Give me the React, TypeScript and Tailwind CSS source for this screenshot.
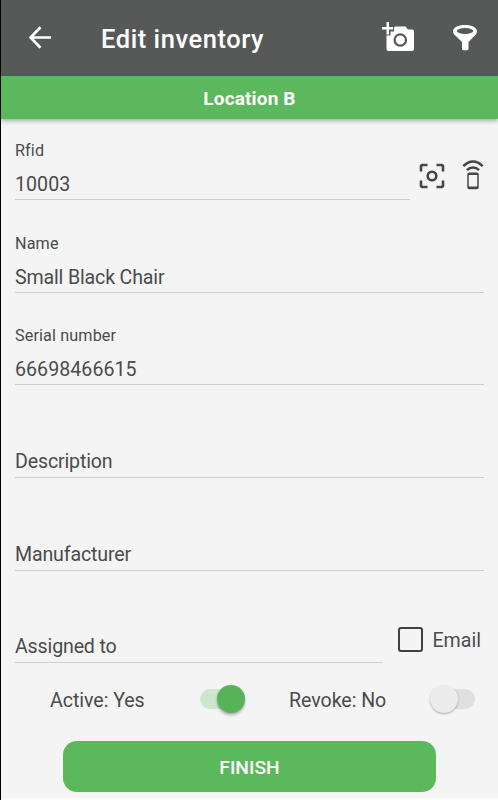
import { clsx } from "clsx";
import type { ReactNode } from "react";

interface FieldProps {
  label?: string;
  value: string;
  className?: string;
  valueClass?: string;
}

function Field({ label, value, className, valueClass = "tracking-[-0.16px]" }: FieldProps) {
  return (
    <div className={clsx("flex flex-col justify-end border-b border-[#cdcdcd]", className)}>
      {label && <div className="mb-[13px] text-[16.2px] leading-5 tracking-[0.12px]">{label}</div>}
      <div className={clsx("text-[19.6px] leading-[22px]", label ? "mb-[3px]" : "mb-[4px]", valueClass)}>{value}</div>
    </div>
  );
}

function Header() {
  return (
    <header className="flex h-[76px] items-center bg-[#575958] text-white">
      <svg viewBox="0 0 24 24" className="ml-[27px] h-6 w-6" fill="none" stroke="currentColor" strokeWidth="2.7">
        <path d="M23 11.500H3M12.500 1.300L2.600 11.500l9.900 10.200" />
      </svg>
      <h1 className="ml-[49px] pt-[2px] text-[25.500px] leading-8 font-medium tracking-[0.55px] whitespace-nowrap">
        Edit inventory
      </h1>
      <div className="mr-[20px] ml-auto flex items-center gap-[37px]">
        {/* Add photo */}
        <svg viewBox="0 0 34 32" className="h-8 w-[34px]" fill="currentColor">
          <path d="M14 4.500h10.500l2.500 3h4q2 0 2 2V27q0 2-2 2H7.500q-2 0-2-2V13.500h4v-4h3.500V5.500z" />
          <path d="M5.500 0h2.500v5h4v2.500H8v5H5.500v-5H1V5h4.500z" />
          <circle cx="19.300" cy="18" r="5.700" fill="none" stroke="#575958" strokeWidth="2.200" />
        </svg>
        {/* Filter */}
        <svg viewBox="0 0 26 28" className="h-7 w-[26px]" fill="currentColor">
          <path d="M1 7.200C1 3.600 6 1 13 1s12 2.600 12 6.200c0 1.500-.6 2.600-1.700 3.800L16.500 18v6.400q0 1.800-1.500 1.800h-3.500q-1.500 0-1.500-1.800V18L2.700 11C1.500 9.800 1 8.700 1 7.200z" />
          <ellipse cx="13" cy="7" rx="8.300" ry="2.900" fill="#575958" />
        </svg>
      </div>
    </header>
  );
}

function ScanIcons() {
  return (
    <div className="flex h-[34px] items-center gap-[17px] text-[#464646]">
      <svg viewBox="0 0 26 26" className="h-[26px] w-[26px]" fill="none" stroke="currentColor" strokeWidth="2.600">
        <path d="M2 8.500V3.500Q2 2 3.500 2h5M17.500 2h5Q24 2 24 3.500v5M24 17.500v5q0 1.500-1.500 1.500h-5M8.500 24h-5Q2 24 2 22.500v-5" />
        <circle cx="13" cy="13" r="4.300" />
      </svg>
      <svg viewBox="0 0 22 32" className="h-8 w-[22px]" fill="none" stroke="currentColor" strokeWidth="2.500">
        <path d="M1.300 6.100C7.500 0 14.500 0 20.700 6.100M5 10.100c3.300-3.600 8.700-3.600 12 0" />
        <path d="M7 13.200h8q1 0 1 1v13q0 1.300-1 1.300H7q-1 0-1-1.300v-13q0-1 1-1z" strokeWidth="1.500" />
        <path d="M6 14h10M6 27.500h10" strokeWidth="2" />
      </svg>
    </div>
  );
}

function Switch({ on }: { on: boolean }) {
  return (
    <div className={clsx("flex h-5 w-[45px] items-center rounded-full", on ? "justify-end bg-[#cde7cd]" : "bg-[#e0e0e0]")}>
      <div
        className={clsx(
          "h-7 w-7 shrink-0 rounded-full",
          on ? "bg-[#56b359] shadow-[0_2px_3px_rgba(0,0,0,0.3)]" : "bg-[#ececec] shadow-[0_1px_2px_rgba(0,0,0,0.3)]",
        )}
      />
    </div>
  );
}

function Toggle({ children, on }: { children: ReactNode; on: boolean }) {
  return (
    <div className="flex items-center justify-between">
      <span className="pt-[3px] text-[19.600px] leading-6 tracking-[-0.05px]">{children}</span>
      <Switch on={on} />
    </div>
  );
}

export default function App() {
  return (
    <div className="flex h-[800px] w-[498px] flex-col overflow-hidden border-l border-black bg-[#f4f4f4] font-[Roboto,sans-serif] text-[#4b4b4b]">
      <Header />
      <div className="h-[43px] shrink-0 bg-[#5cb85c] text-center text-[19px] leading-[45px] font-bold tracking-[0.15px] text-white shadow-[0_2px_4px_rgba(0,0,0,0.3)]">
        Location B
      </div>

      <main className="flex flex-col px-[14px]">
        <div className="flex h-[81px] items-end justify-between">
          <Field label="Rfid" value="10003" className="h-[81px] w-[395px]" valueClass="tracking-[0.05px]" />
          <div className="pb-[7px]">
            <ScanIcons />
          </div>
        </div>
        <Field label="Name" value="Small Black Chair" className="h-[93px]" />
        <Field label="Serial number" value="66698466615" className="h-[92px]" valueClass="tracking-[0.05px]" />
        <Field value="Description" className="h-[93px]" />
        <Field value="Manufacturer" className="h-[93px]" />
        <div className="flex h-[92px] items-end justify-between">
          <Field value="Assigned to" className="h-[92px] w-[368px]" />
          <label className="mr-[3px] mb-[10px] flex items-center gap-[9px] text-[19.600px] leading-6">
            <span className="mb-px h-[25px] w-[25px] rounded-[3px] border-[2.500px] border-[#404040]" />
            <span className="pt-px">Email</span>
          </label>
        </div>
      </main>

      <div className="mt-[22px] ml-[49px] grid h-7 w-[425px] grid-cols-[195px_186px] items-center gap-x-[44px]">
        <Toggle on>Active: Yes</Toggle>
        <Toggle on={false}>Revoke: No</Toggle>
      </div>

      <button className="mt-[28px] ml-[62px] h-[51px] w-[373px] shrink-0 rounded-[14px] bg-[#5cb85c] pt-[3px] text-[19.200px] font-medium text-white">
        FINISH
      </button>
      <div className="mt-auto h-[2px] bg-[#fafafa]" />
    </div>
  );
}
